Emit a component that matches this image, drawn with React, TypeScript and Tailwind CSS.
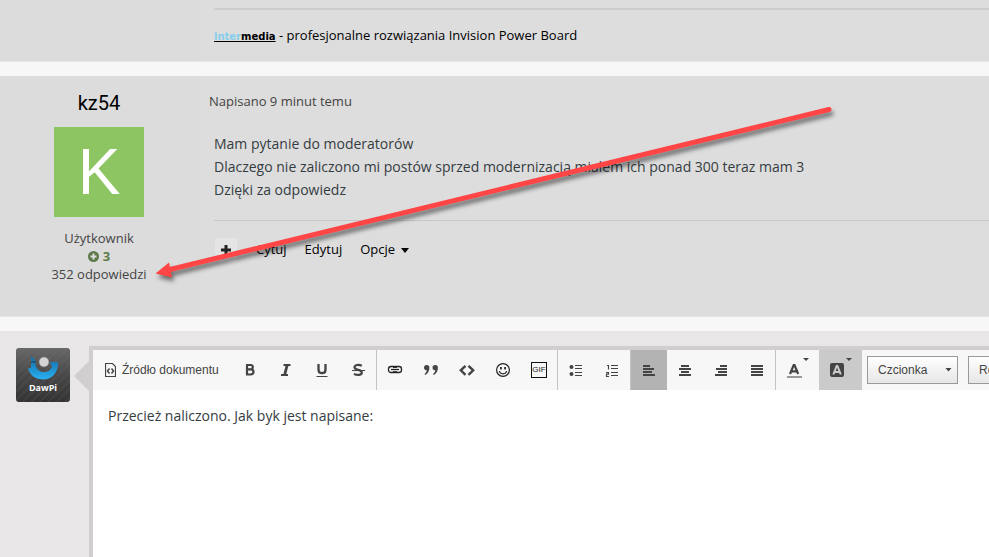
import type { ReactNode } from "react";

function ToolGroup({ children }: { children: ReactNode }) {
  return <div className="flex h-full shrink-0 border-r border-[#c4c4c4]">{children}</div>;
}

function Tool({ label, active, children }: { label: string; active?: boolean; children: ReactNode }) {
  return (
    <button
      type="button"
      aria-label={label}
      className={`flex h-full w-9 items-center justify-center text-[#444] ${active ? "bg-[#b3b3b3]" : ""}`}
    >
      {children}
    </button>
  );
}

function Icon({ children }: { children: ReactNode }) {
  return (
    <svg width="16" height="16" viewBox="0 0 16 16" fill="none" stroke="currentColor" aria-hidden="true">
      {children}
    </svg>
  );
}

function AlignIcon({ rows }: { rows: [number, number][] }) {
  return (
    <Icon>
      {rows.map(([x, w], i) => (
        <rect key={i} x={x} y={3 + i * 3} width={w} height="2" fill="currentColor" stroke="none" />
      ))}
    </Icon>
  );
}

function ToolSelect({ label, className }: { label: string; className: string }) {
  return (
    <label className={`relative block h-7 shrink-0 ${className}`}>
      <select
        aria-label={label}
        className="h-full w-full appearance-none border border-[#999] bg-linear-to-b from-white to-[#e6e6e6] pl-2.5 text-[12px] text-[#444]"
      >
        <option>{label}</option>
      </select>
      <svg className="pointer-events-none absolute top-3 right-1.5" width="7" height="4" aria-hidden="true">
        <path d="M0.5 0h6l-3 3.500z" fill="#444" />
      </svg>
    </label>
  );
}

function CornerCaret() {
  return (
    <svg className="absolute top-2 right-2.5" width="6" height="4" aria-hidden="true">
      <path d="M0 0h6l-3 3z" fill="#444" />
    </svg>
  );
}

function Toolbar() {
  return (
    <div
      role="toolbar"
      className="flex h-10 items-center overflow-hidden bg-[#f7f7f7] font-['Liberation_Sans',Arial,sans-serif] text-[12px] text-[#444]"
    >
      <ToolGroup>
        <button type="button" className="flex w-[139px] shrink-0 items-center gap-1.5 pl-3 whitespace-nowrap">
          <svg width="11" height="14" viewBox="0 0 11 14" fill="none" stroke="#444" aria-hidden="true">
            <path d="M.5.5h7l3 3v10H.5z" strokeWidth="1.200" />
            <path d="M4.500 5.500 2.500 8l2 2.500M6.500 5.500l2 2.500-2 2.500" strokeWidth="1.500" />
          </svg>
          Źródło dokumentu
        </button>
        <Tool label="Pogrubienie">
          <Icon>
            <path d="M5 3.500v9M4 3h4.500c1.500 0 2.300.8 2.300 2 0 1.400-.9 2.300-2.300 2.300H5h3.800c1.800 0 2.700 1.200 2.700 2.500 0 1.700-1.200 2.700-3 2.700H4" strokeWidth="2.200" />
          </Icon>
        </Tool>
        <Tool label="Kursywa">
          <Icon>
            <path d="M5.500 3h7M3 13h7" strokeWidth="2" />
            <path d="M9.200 3l-2.600 10" strokeWidth="2.800" />
          </Icon>
        </Tool>
        <Tool label="Podkreślenie">
          <Icon>
            <path d="M4.500 2v5.500c0 2.600 1.100 3.700 3.500 3.700s3.500-1.100 3.500-3.700V2" strokeWidth="2.300" />
            <path d="M2.500 14.500h11" />
          </Icon>
        </Tool>
        <Tool label="Przekreślenie">
          <Icon>
            <path
              d="M11.800 3.700C8.500 2.200 4.500 2.800 4.500 5.300c0 3.500 7.300 1.700 7.300 5.100 0 2.900-4.300 3-7.800 1.500"
              strokeWidth="2.200"
            />
            <path d="M2 8.500h13" />
          </Icon>
        </Tool>
      </ToolGroup>
      <ToolGroup>
        <Tool label="Odnośnik">
          <Icon>
            <rect x="1.500" y="4.500" width="8" height="6" rx="2.500" stroke="#222" strokeWidth="1.300" />
            <rect x="6.500" y="4.500" width="8" height="6" rx="2.500" stroke="#222" strokeWidth="1.300" />
            <path d="M4.500 7.500h7" stroke="#f7f7f7" strokeWidth="3" />
            <path d="M4 7.500h8" stroke="#222" strokeWidth="1.300" />
          </Icon>
        </Tool>
        <Tool label="Cytat">
          <Icon>
            <g fill="currentColor" stroke="none">
              <path d="M1 5.800a2.500 2.500 0 0 1 5.400 0c0 3.300-1.400 5.900-4.200 7.200l-.7-.9c1.400-1 2.100-2.300 2.300-3.800C2.200 8.500 1 7.400 1 5.800z" />
              <path d="M9.500 5.800a2.500 2.500 0 0 1 5.400 0c0 3.300-1.400 5.900-4.200 7.200l-.7-.9c1.400-1 2.100-2.300 2.300-3.800-1.600.2-2.800-.9-2.800-2.500z" />
            </g>
          </Icon>
        </Tool>
        <Tool label="Kod">
          <Icon>
            <path d="M6.500 3.800 1.800 8.300l4.700 4.500M9.500 3.800l4.700 4.500-4.700 4.500" strokeWidth="2.400" />
          </Icon>
        </Tool>
        <Tool label="Emotikony">
          <Icon>
            <circle cx="8" cy="8" r="6.400" stroke="#222" strokeWidth="1.200" />
            <path d="M4.300 9.200c1 3.500 6.400 3.500 7.400 0" stroke="#222" strokeWidth="1.200" />
            <path d="M5.900 5v2.500M10.100 5v2.500" stroke="#222" strokeWidth="1.700" />
          </Icon>
        </Tool>
        <Tool label="GIF">
          <span className="flex size-4 items-center justify-center border border-[#111] text-[8px] leading-none text-[#222]">
            GIF
          </span>
        </Tool>
      </ToolGroup>
      <ToolGroup>
        <Tool label="Lista wypunktowana">
          <Icon>
            <circle cx="3.500" cy="5" r="2" fill="currentColor" stroke="none" />
            <circle cx="3.500" cy="12" r="2" fill="currentColor" stroke="none" />
            <path d="M7 3.500h7M7 6.500h7M7 10.500h7M7 13.500h7" />
          </Icon>
        </Tool>
        <Tool label="Lista numerowana">
          <Icon>
            <path d="M3 3.500h1.500v4M2 10.500h2.500v1.600H2.500v2.400h2.500" strokeWidth="1.100" />
            <path d="M7 3.500h7M7 6.500h7M7 10.500h7M7 13.500h7" />
          </Icon>
        </Tool>
      </ToolGroup>
      <ToolGroup>
        <Tool label="Do lewej" active>
          <AlignIcon rows={[[2, 7], [2, 11], [2, 9], [2, 12]]} />
        </Tool>
        <Tool label="Wyśrodkuj">
          <AlignIcon rows={[[4, 8], [2, 12], [4, 8], [2, 12]]} />
        </Tool>
        <Tool label="Do prawej">
          <AlignIcon rows={[[7, 7], [3, 11], [5, 9], [2, 12]]} />
        </Tool>
        <Tool label="Wyjustuj">
          <AlignIcon rows={[[2, 12], [2, 12], [2, 12], [2, 12]]} />
        </Tool>
      </ToolGroup>
      <button type="button" aria-label="Kolor tekstu" className="relative flex h-full w-[43px] shrink-0 items-center pl-2.5">
        <svg width="16" height="16" viewBox="0 0 16 16" fill="none" aria-hidden="true">
          <path d="M4 12 7.700 3h.8L12.200 12M5.300 9.300h5.600" stroke="#444" strokeWidth="2.200" />
          <path d="M1 15h15" stroke="#999" strokeWidth="2" />
        </svg>
        <CornerCaret />
      </button>
      <button type="button" aria-label="Kolor tła" className="relative flex h-full w-[43px] shrink-0 items-center bg-[#cacaca] pl-2.5">
        <svg width="16" height="16" viewBox="0 0 16 16" fill="none" aria-hidden="true">
          <rect x="1" y="1" width="14" height="14" rx="2" fill="#444" />
          <path d="M4.300 12.500 7.700 4h.7l3.400 8.500M5.500 10h5" stroke="#cacaca" strokeWidth="2" />
        </svg>
        <CornerCaret />
      </button>
      <div className="flex shrink-0 gap-2.5 pl-[5px]">
        <ToolSelect label="Czcionka" className="w-[91px]" />
        <ToolSelect label="Rozmiar" className="w-[85px]" />
      </div>
    </div>
  );
}

function DawPiAvatar() {
  return (
    <svg width="54" height="54" viewBox="0 0 54 54" role="img" aria-label="DawPi">
      <defs>
        <linearGradient id="plate" x1="0" y1="0" x2="0" y2="1">
          <stop offset="0" stopColor="#686868" />
          <stop offset=".5" stopColor="#484848" />
          <stop offset="1" stopColor="#333" />
        </linearGradient>
        <linearGradient id="swoosh" x1="0" y1="0" x2="0" y2="1">
          <stop offset="0" stopColor="#126aa8" />
          <stop offset="1" stopColor="#2bb0ef" />
        </linearGradient>
        <pattern id="stripes" width="6" height="6" patternUnits="userSpaceOnUse" patternTransform="rotate(-45)">
          <path d="M0 1h6" stroke="#777" strokeOpacity=".4" strokeDasharray="2 1" />
        </pattern>
      </defs>
      <rect width="54" height="54" rx="3" fill="url(#plate)" />
      <rect width="54" height="54" rx="3" fill="url(#stripes)" />
      <path
        d="M15 8l4.500 4.500V17c1 4.500 4.500 7 8.500 7 4.500 0 7.500-2.500 8-6.500l-1.500-.5v-3H42v3c-1 9-7 14.500-14.500 14.500C19.500 31.500 13.500 27 12 20h3z"
        fill="url(#swoosh)"
      />
      <path d="M15 14h5" stroke="#333" />
      <circle cx="28" cy="14" r="5" fill="#d3d3d3" stroke="#777" strokeWidth=".6" />
      <text x="27" y="43" textAnchor="middle" fill="#fff" className="font-['Open_Sans',sans-serif] text-[9px] font-bold">
        DawPi
      </text>
    </svg>
  );
}

function PointerArrow() {
  return (
    <svg className="pointer-events-none absolute top-0 left-0" width="850" height="220" aria-hidden="true">
      <g fill="#ff4545" className="drop-shadow-[2px_4px_2px_rgba(0,0,0,0.5)]">
        <path d="M168 194 829 33.500" stroke="#ff4545" strokeWidth="5" strokeLinecap="round" />
        <path d="M155.500 197.500 169 186.500 172 201.500z" />
      </g>
    </svg>
  );
}

export default function App() {
  return (
    <div className="min-h-screen overflow-hidden bg-[#f7f7f7] font-['Open_Sans','Noto_Sans',sans-serif] text-[13px] text-[#444]">
      <article className="flex h-[62px] border-b border-[#e6e6e6] bg-[#dcdcdc]">
        <div className="w-[198px] shrink-0" />
        <div className="flex-1 border-l border-[#dadada] bg-[#dddddd] pt-2 pl-[15px]">
          <p className="border-t-2 border-[#cdcdcd] pt-[15px] leading-5 text-black">
            <a href="#intermedia" className="font-['DejaVu_Sans',sans-serif] text-[10px] font-black text-black underline">
              <span className="text-[#87ceeb]">inter</span>media
            </a>{" "}
            - profesjonalne rozwiązania Invision Power Board
          </p>
        </div>
      </article>

      <article className="relative mt-3.5 flex h-[241px] border-b border-[#e6e6e6] bg-[#dcdcdc]">
        <aside className="flex w-[198px] shrink-0 flex-col items-center pt-[14px] leading-[18px]">
          <h3 className="font-[Roboto,sans-serif] text-[20px] leading-[26px] text-black">kz54</h3>
          <div className="mt-[11px] flex size-[90px] items-center justify-center bg-[#8dc563] font-['Liberation_Sans',Arial,sans-serif] text-[64px] leading-none text-white">
            K
          </div>
          <p className="mt-3">Użytkownik</p>
          <p className="flex items-center gap-1 font-bold text-[#5d7b48]">
            <svg width="11" height="11" viewBox="0 0 11 11" aria-hidden="true">
              <circle cx="5.500" cy="5.500" r="5.500" fill="#5d7b48" />
              <path d="M5.500 2.500v6M2.500 5.500h6" stroke="#dcdcdc" strokeWidth="2" />
            </svg>
            3
          </p>
          <p>352 odpowiedzi</p>
        </aside>
        <div className="flex-1 border-l border-[#dadada] bg-[#dddddd]">
          <p className="pt-4 pl-2.5 leading-[18px]">Napisano 9 minut temu</p>
          <div className="ml-[15px]">
            <p className="mt-[22px] text-[14px] leading-[23px] text-[#353c41]">
              Mam pytanie do moderatorów
              <br />
              Dlaczego nie zaliczono mi postów sprzed modernizacją miałem ich ponad 300 teraz mam 3
              <br />
              Dzięki za odpowiedz
            </p>
            <div className="mt-[19px] flex items-center border-t border-[#c8c8c8] pt-[17px] text-black">
              <button type="button" aria-label="Dodaj cytat" className="ml-px flex h-6 w-[22px] items-center justify-center bg-[#e4e4e4]">
                <svg width="10" height="10" aria-hidden="true">
                  <path d="M5 0v10M0 5h10" stroke="#222" strokeWidth="3" />
                </svg>
              </button>
              <button type="button" className="ml-[19px]">Cytuj</button>
              <button type="button" className="ml-[18px]">Edytuj</button>
              <button type="button" className="ml-[18px] flex items-center gap-1.5">
                Opcje
                <svg width="8" height="5" aria-hidden="true">
                  <path d="M0 0h8L4 5z" />
                </svg>
              </button>
            </div>
          </div>
        </div>
        <PointerArrow />
      </article>

      <section className="mt-3.5 flex min-h-[226px] bg-[#e8e6e7] pt-[15px] pl-4">
        <div className="w-[54px] shrink-0 pt-0.5">
          <DawPiAvatar />
        </div>
        <svg className="mt-[15px] ml-1 shrink-0" width="15" height="30" aria-hidden="true">
          <path d="M15 0v30L0 15z" fill="#d0cecf" />
        </svg>
        <div className="flex min-w-0 flex-1 flex-col border-t-4 border-l-4 border-[#d0cecf] bg-white">
          <Toolbar />
          <textarea
            aria-label="Treść odpowiedzi"
            className="w-full flex-1 resize-none px-[15px] pt-[15px] text-[14px] leading-[22px] text-[#353c41] outline-none"
            defaultValue="Przecież naliczono. Jak byk jest napisane:"
          />
        </div>
      </section>
    </div>
  );
}
